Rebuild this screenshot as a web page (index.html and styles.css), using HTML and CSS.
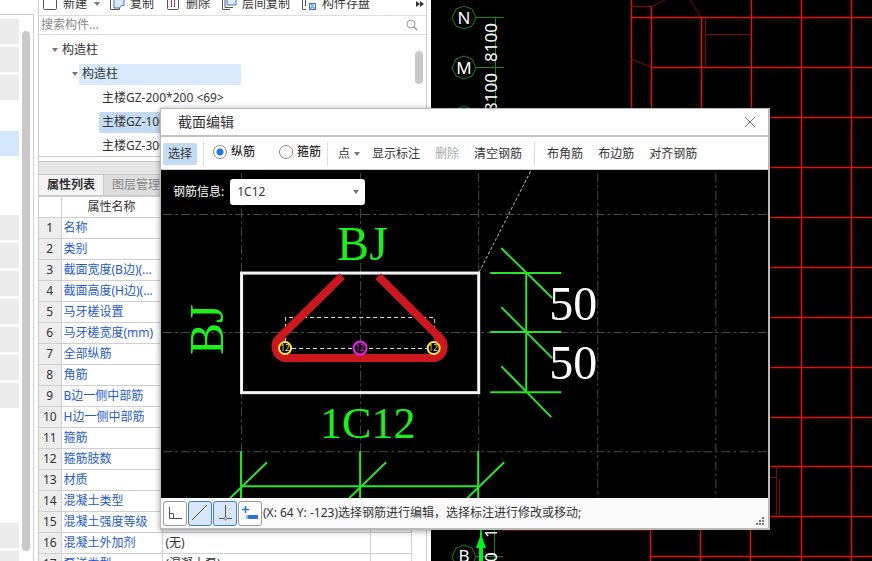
FILE: index.html
```html
<!DOCTYPE html>
<html lang="zh-CN">
<head>
<meta charset="utf-8">
<title>截面编辑</title>
<link rel="stylesheet" href="styles.css">
</head>
<body>
<div class="app">
  <nav class="modules" aria-label="模块">
    <div class="module-list">
      <i class="m"></i><i class="m"></i><i class="m"></i><i class="m empty"></i><i class="m active"></i><i class="m empty"></i><i class="m empty"></i>
      <i class="m"></i><i class="m"></i><i class="m"></i><i class="m"></i><i class="m"></i><i class="m"></i><i class="m"></i>
      <i class="m empty"></i><i class="m empty"></i><i class="m empty"></i><i class="m empty"></i><i class="m"></i><i class="m"></i>
    </div>
    <div class="scroll"></div>
  </nav>

  <section class="side">
    <div class="tools">
      <button class="tool first"><svg width="16" height="16" viewBox="0 0 16 16"><rect x="1.500" y="1.500" width="13" height="12" rx="1" fill="none" stroke="#555"/></svg>新建<span class="caret"></span></button>
      <button class="tool"><svg width="16" height="16" viewBox="0 0 16 16"><path d="M5 3H1.500v10.500h9V11" fill="#fff" stroke="#555"/><path d="M5 1h10v8.500h-2.500l-2 2.500H5z" fill="#dceaff" stroke="#3978d8"/></svg>复制</button>
      <button class="tool"><svg width="16" height="16" viewBox="0 0 16 16"><rect x="2.500" y="1.500" width="11" height="12" rx="1" fill="#fff" stroke="#555"/><path d="M6.500 3v8M9.500 3v8" stroke="#d03040"/></svg>删除</button>
      <button class="tool"><svg width="16" height="16" viewBox="0 0 16 16"><path d="M1.500 2v11.500H9M4 1v10.500h8" fill="none" stroke="#555"/><path d="M6 1h9v8h-9z" fill="#dceaff" stroke="#3978d8"/></svg>层间复制</button>
      <button class="tool"><svg width="16" height="16" viewBox="0 0 16 16"><path d="M5 13.500H1.500V2M4.500 2v8" fill="none" stroke="#555"/><rect x="8.500" y="7.500" width="6" height="6" fill="#fff" stroke="#3978d8"/><path d="M10 14v-3h3v3M10 8v1h3" fill="none" stroke="#3978d8"/></svg>构件存盘</button>
      <button class="more" aria-label="更多"><svg width="8" height="8" viewBox="0 0 8 8"><path d="M0 1l4 3-4 3zM4 1l4 3-4 3z" fill="#333"/></svg></button>
    </div>
    <label class="search"><input type="text" placeholder="搜索构件..." aria-label="搜索构件"><svg width="12" height="12" viewBox="0 0 12 12"><circle cx="5" cy="5" r="4" fill="none" stroke="#999"/><path d="M8 8l3 3" stroke="#999" stroke-width="1.500"/></svg></label>
    <div class="tree">
      <ul>
        <li class="l1"><span class="caret"></span><span>构造柱</span></li>
        <li class="l2"><span class="caret"></span><span class="hot">构造柱</span></li>
        <li class="l3"><span>主楼GZ-200*200 &lt;69&gt;</span></li>
        <li class="l3"><span class="sel">主楼GZ-100</span></li>
        <li class="l3"><span>主楼GZ-300</span></li>
      </ul>
      <div class="scroll"></div>
    </div>
    <div class="tabs"><button class="tab on">属性列表</button><button class="tab">图层管理</button></div>
    <table class="props">
      <colgroup><col class="c1"><col class="c2"><col class="c3"><col class="c4"></colgroup>
      <thead><tr><th></th><th>属性名称</th><th></th><th></th></tr></thead>
      <tbody>
        <tr><th>1</th><td>名称</td><td></td><td></td></tr>
        <tr><th>2</th><td>类别</td><td></td><td></td></tr>
        <tr><th>3</th><td>截面宽度(B边)(...</td><td></td><td></td></tr>
        <tr><th>4</th><td>截面高度(H边)(...</td><td></td><td></td></tr>
        <tr><th>5</th><td>马牙槎设置</td><td></td><td></td></tr>
        <tr><th>6</th><td>马牙槎宽度(mm)</td><td></td><td></td></tr>
        <tr><th>7</th><td>全部纵筋</td><td></td><td></td></tr>
        <tr><th>8</th><td>角筋</td><td></td><td></td></tr>
        <tr><th>9</th><td>B边一侧中部筋</td><td></td><td></td></tr>
        <tr><th>10</th><td>H边一侧中部筋</td><td></td><td></td></tr>
        <tr><th>11</th><td>箍筋</td><td></td><td></td></tr>
        <tr><th>12</th><td>箍筋肢数</td><td></td><td></td></tr>
        <tr><th>13</th><td>材质</td><td></td><td></td></tr>
        <tr><th>14</th><td>混凝土类型</td><td></td><td></td></tr>
        <tr><th>15</th><td>混凝土强度等级</td><td></td><td></td></tr>
        <tr><th>16</th><td>混凝土外加剂</td><td>(无)</td><td></td></tr>
        <tr><th>17</th><td>泵送类型</td><td>(混凝土泵)</td><td></td></tr>
      </tbody>
    </table>
  </section>

  <main class="plan">
    <svg viewBox="431 0 441 561" preserveAspectRatio="xMinYMin slice" role="img" aria-label="平面图">
      <defs>
        <path id="grid" d="M631.500 0V110M651.500 6V110M701.500 17V110M751.500 0V110M801.500 0V561M851.500 0V561M650.500 530V561M700.500 530V561M750.500 530V561M631 17.500H872M651 67.500H872M769 117.500H872M769 167.500H872M769 217.500H872M769 267.500H872M769 317.500H872M769 367.500H872M769 417.500H872M769 466.500H872M769 516.500H872M650 556.500H872"/>
      </defs>
      <use href="#grid" class="grid-halo"/>
      <use href="#grid" class="grid"/>
      <g class="grid-dim">
        <path d="M631 6.500H652L665 0M631 59L651 67M690 0L701 17M705.500 17V67M705 34.500H751M769 477.500H776M776.500 466V515M779.500 479V515M503 530.500H650"/>
      </g>
      <g class="axis">
        <path d="M476 17.500H504M476 67.500H504M495.500 17V110M494.500 530V561M476 556.500H503"/>
        <path d="M464 6l8 3 4 9-4 8-8 3-8-3-4-8 4-9z"/>
        <path d="M464 56l8 3 4 9-4 8-8 3-8-3-4-8 4-9z"/>
        <path d="M464 106l8 3 4 9-4 8-8 3-8-3-4-8 4-9z"/>
        <path d="M464 545l8 3 4 9-4 8-8 3-8-3-4-8 4-9z"/>
      </g>
      <path class="arrow" d="M480 530h2v7l4 11h-3v13h-4v-13h-3l4-11z"/>
      <g class="axis-name"><text x="464" y="24">N</text><text x="464" y="74">M</text><text x="464" y="562">B</text></g>
      <g class="axis-dim"><text transform="translate(497 62) rotate(-90)">8100</text><text transform="translate(497 112) rotate(-90)">8100</text><text transform="translate(497 562) rotate(-90)">0</text><text transform="translate(497 538) rotate(-90)">1</text></g>
    </svg>
  </main>
</div>

<div class="dialog" role="dialog" aria-labelledby="dlg-title">
  <header class="title"><h1 id="dlg-title">截面编辑</h1><button aria-label="关闭"><svg width="12" height="12" viewBox="0 0 12 12"><path d="M1 1l10 10M11 1L1 11" stroke="#777" fill="none"/></svg></button></header>
  <div class="bar">
    <button class="pick">选择</button>
    <div class="radios">
      <label><input type="radio" name="kind" checked>纵筋</label>
      <label><input type="radio" name="kind">箍筋</label>
    </div>
    <button class="point">点<span class="caret"></span></button>
    <div class="acts"><button>显示标注</button><button disabled>删除</button><button>清空钢筋</button></div>
    <div class="acts last"><button>布角筋</button><button>布边筋</button><button>对齐钢筋</button></div>
  </div>
  <div class="canvas">
    <svg viewBox="161 170 607 328" role="img" aria-label="截面">
      <g class="guides"><path d="M241.500 173V498M360.500 173V498M478.500 173V498M597.500 173V498M715.500 173V498M163 214.500H768M163 332.500H768M163 451.500H768"/></g>
      <path d="M479 272L531 170" stroke="#aaa" stroke-dasharray="3 2" fill="none"/>
      <rect x="241.500" y="273" width="237" height="119.500" fill="none" stroke="#f4f4f4" stroke-width="3"/>
      <path class="inner" d="M285.500 342V317.500H434.500V340M292 348.500H427"/>
      <path d="M342 276L279 338A12 12 0 0 0 284 358H435A12 12 0 0 0 440 338L378 276" fill="none" stroke="#cb181e" stroke-width="8"/>
      <path d="M279 338A12 12 0 0 0 284 358L285 338zM440 338A12 12 0 0 1 435 358L434 338z" fill="#cb181e"/>
      <g fill="#000" stroke-width="2"><circle cx="285" cy="348" r="6" stroke="#ffe34a"/><circle cx="360" cy="348" r="6.500" stroke="#f21cf2"/><circle cx="433.500" cy="348" r="6" stroke="#ffe34a"/></g>
      <g class="bars"><text x="285" y="351">12</text><text class="mid" x="360" y="351">12</text><text x="433" y="351">12</text></g>
      <g class="dims">
        <path d="M490 273H561M490 332H561M490 392H561M526 273V392M501 248L552 298M501 307L552 358M501 366L551 417"/>
        <path d="M241 451V498M360 451V498M478 451V498M241 486H478M230 498L267 462M349 498L386 462M467 498L504 462"/>
      </g>
      <g class="marks"><text x="337" y="260">BJ</text><text transform="translate(223 355) rotate(-90)">BJ</text><text class="small" x="320" y="438">1C12</text></g>
      <g class="nums"><text x="549" y="320">50</text><text x="549" y="379">50</text></g>
    </svg>
    <div class="field"><label for="info">钢筋信息:</label><span class="combo"><select id="info"><option>1C12</option></select><span class="caret"></span></span></div>
  </div>
  <footer class="status">
    <button aria-label="直角"><svg width="20" height="20" viewBox="0 0 20 20"><path d="M4.500 4v11.500H17M4.500 10.500h4v5" fill="none" stroke="#555"/></svg></button>
    <button class="on" aria-label="直线"><svg width="20" height="20" viewBox="0 0 20 20"><path d="M2 17L17 2" fill="none" stroke="#555"/></svg></button>
    <button class="on" aria-label="垂足"><svg width="20" height="20" viewBox="0 0 20 20"><path d="M10.500 2v12M4 15.500h5M12 15.500h5" fill="none" stroke="#555"/><circle cx="10.500" cy="15.500" r="1.500" fill="none" stroke="#777"/></svg></button>
    <button aria-label="动态输入"><svg width="20" height="20" viewBox="0 0 20 20"><path d="M5.500 3v7M2 6.500h7" stroke="#2a72d4" stroke-width="1.500"/><rect x="8" y="12" width="10" height="4" rx="1" fill="#2a72d4"/><path d="M7 12v4" stroke="#2a72d4"/></svg></button>
    <span>(X: 64 Y: -123)选择钢筋进行编辑，选择标注进行修改或移动;</span>
    <svg class="grip" width="8" height="8" viewBox="0 0 8 8"><path d="M0 6h2v2H0zM3 6h2v2H3zM6 6h2v2H6zM3 3h2v2H3zM6 3h2v2H6zM6 0h2v2H6z" fill="#777"/></svg>
  </footer>
</div>
</body>
</html>
```

FILE: styles.css
```css
* { box-sizing: border-box; }
body {
  margin: 0;
  font: 12px/16px "Noto Sans", "Noto Sans CJK SC", sans-serif;
  color: #333;
  background: #fff;
}
button { font: inherit; color: inherit; border: 0; background: none; padding: 0; margin: 0; white-space: nowrap; }
svg { display: block; flex: none; }
.caret {
  display: inline-block;
  border: 3px solid transparent;
  border-top: 4px solid #777;
  border-bottom: 0;
  flex: none;
}
.app { display: flex; height: 100vh; overflow: hidden; }

/* module strip */
.modules { display: flex; width: 34px; flex: none; margin-top: 14px; border-top: 1px solid #d0d0d0; border-right: 1px solid #d0d0d0; }
.module-list { display: flex; flex-direction: column; gap: 3px; width: 19px; padding-top: 4px; }
.m { height: 25px; flex: none; background: #ebebeb; }
.m.active { background: #d5e7fd; }
.m.empty { background: none; }
.scroll { width: 8px; border-radius: 4px; background: #c9c9c9; }
.modules .scroll { margin: 16px 0 10px 3px; }

/* component panel */
.side { display: flex; flex-direction: column; width: 389px; margin: 0 4px; flex: none; border: 1px solid #ccc; border-width: 0 1px; }
.tools { display: flex; align-items: center; gap: 11px; height: 16px; padding: 0 2px 8px 3px; border-bottom: 1px solid #ddd; overflow: hidden; flex: none; }
.tool { display: flex; align-items: center; gap: 5px; }
.tool .caret { margin-left: 2px; }
.tool.first { margin-right: -2px; }
.more { margin-left: auto; }
.search { display: flex; align-items: center; height: 19px; padding: 0 8px 0 2px; border-bottom: 1px solid #ddd; flex: none; }
.search input { flex: 1; border: 0; padding: 0; font: inherit; background: none; outline: 0; }
.search input::placeholder { color: #888; opacity: 1; }
.tree { display: flex; height: 122px; border-bottom: 1px solid #ccc; padding-top: 3px; flex: none; }
.tree ul { flex: 1; margin: 0; padding: 0; list-style: none; }
.tree li { display: flex; align-items: center; gap: 1px; height: 24px; white-space: nowrap; }
.tree li span:last-child { height: 21px; line-height: 20px; padding: 0 3px; border-radius: 2px; }
.l1 { padding-left: 13px; }
.l2 { padding-left: 33px; }
.l3 { padding-left: 60px; }
.hot { width: 162px; background: #d9eafd; }
.sel { width: 142px; background: #c3daf2; }
.tree .scroll { height: 33px; margin: 13px 3px 0 0; }
.tabs { display: flex; margin-top: 4px; padding-top: 12px; background: #e6e6e6; border-top: 1px solid #c8c8c8; flex: none; }
.tab { height: 22px; padding: 0 8px; color: #888; background: #ddd; border: 1px solid #c8c8c8; border-left: 0; }
.tab.on { color: #333; background: #f4f4f4; font-weight: 700; }

.props { border-collapse: collapse; table-layout: fixed; width: 372px; flex: none; }
.c1 { width: 22px; }
.c2 { width: 101px; }
.c3 { width: 208px; }
.c4 { width: 41px; }
.props th, .props td { height: 21px; padding: 0 3px; border: 1px solid #d0d0d0; border-left: 0; font-weight: 400; line-height: 20px; white-space: nowrap; overflow: hidden; }
.props thead th { text-align: center; }
.props tbody th { background: #ededed; font-size: 12px; padding: 0; }
.props td:nth-child(2) { padding-left: 2px; color: #1f5bd0; }

/* plan drawing */
.plan { flex: 1; min-width: 0; background: #000; }
.plan svg { width: 100%; height: 100%; }
.grid { stroke: #d81810; fill: none; }
.grid-halo { stroke: #f00; stroke-width: 3; stroke-opacity: .25; fill: none; }
.grid-dim { stroke: #800c08; fill: none; }
.axis { stroke: #0c8c1c; fill: none; }
.arrow { fill: #00f020; }
.axis-name { fill: #fff; font-size: 17px; text-anchor: middle; }
.axis-dim { fill: #fff; font-size: 17px; }

/* section editor */
.dialog { position: absolute; left: 160px; top: 108px; width: 70%; background: #fff; border: 1px solid #b8babc; border-right-width: 2px; border-bottom-width: 2px; box-shadow: 0 1px 6px #0006; }
.title { display: flex; align-items: center; justify-content: space-between; height: 28px; padding: 0 12px 0 17px; border-bottom: 2px solid #c2c2c4; }
.title h1 { margin: 0; font-size: 14px; font-weight: 400; }
.bar { display: flex; align-items: center; height: 33px; padding: 2px 0 0 2px; border-bottom: 1px solid #ccc; white-space: nowrap; }
.pick { height: 22px; padding: 0 5px; border-radius: 2px; background: #c3daf3; }
.radios { display: flex; gap: 24px; height: 24px; margin-left: 6px; padding: 0 6px 0 9px; border: 1px solid #ddd; border-width: 0 1px; color: #000; }
.radios label { display: flex; align-items: center; gap: 4px; height: 20px; }
.radios input { appearance: none; width: 14px; height: 14px; margin: 0; border: 1px solid #888; border-radius: 50%; }
.radios input:checked { background: radial-gradient(circle, #1f78dc 3px, #fff 4px); }
.point { display: flex; align-items: center; gap: 4px; margin-left: 10px; }
.acts { display: flex; gap: 15px; padding: 4px 12px; }
.acts.last { border-left: 1px solid #ddd; }
.acts button:disabled { color: #aaa; }
.canvas { position: relative; background: #000; }
.canvas > svg { width: 100%; height: auto; }
.guides { stroke: #45484c; fill: none; stroke-dasharray: 9 3 3 3; }
.inner { stroke: #ddd; stroke-dasharray: 4 3; fill: none; }
.bars { fill: #ffe34a; font-size: 8px; text-anchor: middle; }
.bars .mid { fill: #f21cf2; }
.dims { stroke: #28e428; stroke-width: 2; fill: none; }
.marks, .nums { font-family: "Liberation Serif", serif; font-size: 48px; fill: #1cf01c; }
.marks .small { font-size: 44px; }
.nums { fill: #fff; }
.field { position: absolute; left: 12px; top: 9px; display: flex; align-items: center; gap: 6px; color: #fff; }
.combo { display: flex; align-items: center; width: 135px; height: 26px; padding-right: 6px; border-radius: 3px; background: #fff; }
.combo select { flex: 1; height: 26px; appearance: none; border: 0; padding: 0 7px; background: none; color: #333; font: inherit; font-size: 12px; }
.status { display: flex; align-items: center; gap: 1px; height: 30px; padding: 0 4px 0 2px; background: #fafafa; }
.status button { display: grid; place-items: center; width: 24px; height: 25px; border: 1px solid #999; border-radius: 3px; background: #fff; }
.status button.on { border-color: #3b80d8; background: #d8e6f8; }
.status span { flex: 1; white-space: nowrap; }
.grip { align-self: flex-end; margin-bottom: 3px; }
```
